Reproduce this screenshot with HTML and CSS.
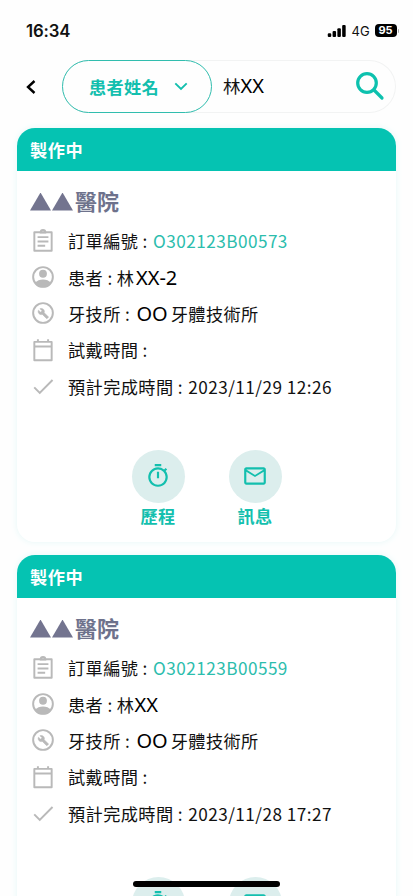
FILE: index.html
```html
<!DOCTYPE html>
<html lang="zh-Hant">
<head>
<meta charset="utf-8">
<title>訂單</title>
<link rel="stylesheet" href="styles.css">
</head>
<body>
<svg class="defs" aria-hidden="true">
  <symbol id="clipboard" viewBox="0 0 24 24">
    <path fill="none" stroke="currentColor" stroke-width="1.8" stroke-linejoin="round" d="M4 4h16v17H4z"/>
    <path fill="currentColor" fill-rule="evenodd" d="M9 4a3 3 0 0 1 6 0v1H9zM12 2.8a.9.9 0 1 0 0 1.8.9.9 0 0 0 0-1.8zM7 7.5h10v1.8H7zM7 11.5h10v1.8H7zM7 15.5h7v1.8H7z"/>
  </symbol>
  <symbol id="person" viewBox="0 0 24 24">
    <circle cx="12" cy="12" r="9.1" fill="none" stroke="currentColor" stroke-width="1.8"/>
    <circle cx="12" cy="9" r="3.6" fill="currentColor"/>
    <path fill="currentColor" d="M4.5 17.5Q7.5 14.3 12 14.3t7.5 3.2Q17 21.5 12 21.5t-7.5-4z"/>
  </symbol>
  <symbol id="wrench" viewBox="0 0 24 24">
    <circle cx="12" cy="12" r="9.1" fill="none" stroke="currentColor" stroke-width="1.8"/>
    <path fill="currentColor" stroke="currentColor" stroke-width=".5" d="M16.900 15.490l-3.800-3.800c.4-1 .2-2.200-.6-3-.9-.9-2.200-1.100-3.300-.6l1.900 1.900-1.300 1.300-2-1.900c-.5 1.100-.3 2.400.6 3.300.8.8 2 1 3 .6l3.800 3.800c.2.2.5.2.7 0l1-1c.2-.1.2-.4 0-.6z"/>
  </symbol>
  <symbol id="calendar" viewBox="0 0 24 24">
    <path fill="none" stroke="currentColor" stroke-width="1.8" stroke-linejoin="round" d="M4 4.500h16v17H4zM4 8.800h16M7.300 2v3M16.700 2v3"/>
  </symbol>
  <symbol id="check" viewBox="0 0 24 24">
    <path fill="none" stroke="currentColor" stroke-width="1.8" d="M3.900 13.300l5.100 5L20.800 6.500"/>
  </symbol>
  <symbol id="timer" viewBox="0 0 24 24">
    <path fill="currentColor" d="M9 1h6v2H9zM11 8h2v6h-2zM19.03 7.39l1.42-1.42c-.43-.51-.9-.99-1.41-1.41l-1.42 1.42A8.96 8.96 0 0 0 12 4a9 9 0 1 0 7.03 3.39zM12 20a7 7 0 1 1 0-14 7 7 0 0 1 0 14z"/>
  </symbol>
  <symbol id="mail" viewBox="0 0 24 24">
    <path fill="currentColor" d="M22 6c0-1.100-.9-2-2-2H4c-1.100 0-2 .9-2 2v12c0 1.100.9 2 2 2h16c1.100 0 2-.9 2-2zm-2 0l-8 5-8-5zm0 12H4V8l8 5 8-5z"/>
  </symbol>
</svg>
<div class="screen">
  <header class="status">
    <span class="time">16:34</span>
    <svg class="signal" viewBox="0 0 20 13"><rect x="0" y="9" width="3.800" height="4" rx="1.200"/><rect x="5.200" y="6.500" width="3.800" height="6.500" rx="1.200"/><rect x="10.400" y="3.500" width="3.800" height="9.500" rx="1.200"/><rect x="15.600" y="0" width="3.800" height="13" rx="1.200"/></svg>
    <span class="network">4G</span>
    <span class="battery">95</span>
    <span class="battery-tip"></span>
  </header>

  <nav class="toolbar">
    <svg class="back" viewBox="0 0 10 14"><path d="M8.500 1L2 7l6.500 6"/></svg>
    <div class="search">
      <div class="filter">
        <span>患者姓名</span>
        <svg class="chevron" viewBox="0 0 14 9"><path d="M1.300 1.300L7 7l5.700-5.700"/></svg>
      </div>
      <div class="query">林<span class="latin">XX</span></div>
      <svg class="magnifier" viewBox="0 0 30 30"><circle cx="12" cy="12" r="9.300"/><path d="M19 19l8 8"/></svg>
    </div>
  </nav>

  <main class="orders">
    <article class="card">
      <div class="card-head">製作中</div>
      <div class="card-body">
        <h2><span class="triangle"></span><span class="triangle"></span>醫院</h2>
        <ul>
          <li><svg><use href="#clipboard"/></svg><span>訂單編號 : <span class="code">O302123B00573</span></span></li>
          <li><svg><use href="#person"/></svg><span>患者 : 林<span class="latin suffixed">XX-2</span></span></li>
          <li><svg><use href="#wrench"/></svg><span>牙技所 : <span class="latin lab">OO</span>牙體技術所</span></li>
          <li><svg><use href="#calendar"/></svg><span>試戴時間 :</span></li>
          <li><svg><use href="#check"/></svg><span>預計完成時間 : <span class="date">2023/11/29 12:26</span></span></li>
        </ul>
        <div class="actions">
          <div class="action"><div class="disc"><svg><use href="#timer"/></svg></div>歷程</div>
          <div class="action"><div class="disc"><svg><use href="#mail"/></svg></div>訊息</div>
        </div>
      </div>
    </article>

    <article class="card">
      <div class="card-head">製作中</div>
      <div class="card-body">
        <h2><span class="triangle"></span><span class="triangle"></span>醫院</h2>
        <ul>
          <li><svg><use href="#clipboard"/></svg><span>訂單編號 : <span class="code">O302123B00559</span></span></li>
          <li><svg><use href="#person"/></svg><span>患者 : 林<span class="latin">XX</span></span></li>
          <li><svg><use href="#wrench"/></svg><span>牙技所 : <span class="latin lab">OO</span>牙體技術所</span></li>
          <li><svg><use href="#calendar"/></svg><span>試戴時間 :</span></li>
          <li><svg><use href="#check"/></svg><span>預計完成時間 : <span class="date">2023/11/28 17:27</span></span></li>
        </ul>
        <div class="actions">
          <div class="action"><div class="disc"><svg><use href="#timer"/></svg></div></div>
          <div class="action"><div class="disc"><svg><use href="#mail"/></svg></div></div>
        </div>
      </div>
    </article>
  </main>
  <div class="home-bar"></div>
</div>
</body>
</html>
```
FILE: styles.css
```css
* { box-sizing: border-box; }
body {
  margin: 0;
  background: #fefefe;
  color: #111;
  font-family: "Noto Sans CJK TC", sans-serif;
}
.defs { position: absolute; width: 0; height: 0; }
.screen {
  position: relative;
  width: 413px;
  height: 896px;
  overflow: hidden;
}
.status {
  display: flex;
  align-items: center;
  height: 60px;
  padding: 1px 14px 0 26px;
  font-family: Inter, sans-serif;
}
.time { flex: 1; font-size: 16.800px; font-weight: 600; letter-spacing: -0.150px; }
.signal { width: 20px; height: 12px; margin-right: 5px; }
.network { width: 23px; font-size: 13px; }
.battery {
  width: 22px;
  height: 13px;
  border-radius: 4px;
  background: #000;
  color: #fff;
  font-size: 11px;
  font-weight: 700;
  line-height: 13px;
  text-align: center;
}
.battery-tip { width: 1.500px; height: 4px; margin-left: 1px; border-radius: 0 2px 2px 0; background: #aaa; }

.toolbar { display: flex; align-items: center; height: 53px; padding: 0 17px 0 26px; }
.back { width: 10px; height: 14px; margin-right: 26px; fill: none; stroke: #000; stroke-width: 2.400; }
.search {
  display: flex;
  flex: 1;
  align-items: center;
  height: 53px;
  padding-right: 10px;
  border: 1px solid #f2f3f3;
  border-left: 0;
  border-radius: 27px;
}
.filter {
  display: flex;
  align-items: center;
  justify-content: space-between;
  width: 150px;
  height: 53px;
  padding: 0 23px 0 26px;
  border: 1px solid #31bdae;
  border-radius: 27px;
  color: #13bfae;
  font-size: 17.200px;
  font-weight: 700;
  letter-spacing: 0.300px;
}
.chevron { width: 14px; height: 9px; fill: none; stroke: currentColor; stroke-width: 1.900; }
.query { flex: 1; padding: 0 0 2px 11px; font-size: 17.500px; }
.magnifier { width: 30px; height: 30px; margin-bottom: 1px; fill: none; stroke: #0dc1ae; stroke-width: 3.200; stroke-linecap: round; }
.latin { font-family: "Noto Sans", sans-serif; font-size: 20px; letter-spacing: 0; line-height: 1; color: #000; }

.orders { display: grid; gap: 13px; padding: 15px 17px 0; }
.card {
  height: 414px;
  overflow: hidden;
  border-radius: 18px;
  background: #fff;
  box-shadow: 0 0 7px #e6f8f8;
}
.card-head {
  height: 43px;
  padding-left: 13px;
  background: #05c3b2;
  color: #fff;
  font-size: 17.200px;
  font-weight: 700;
  letter-spacing: 0.600px;
  line-height: 43px;
}
.card-body { padding: 13px 13px 0; }
h2 {
  display: flex;
  align-items: center;
  height: 32px;
  margin: 0 0 7px;
  color: #6e728c;
  font-size: 22px;
  font-weight: 700;
}
.triangle {
  width: 21px;
  height: 18px;
  margin: 3px 1px 0 0;
  background: #73748f;
  clip-path: polygon(50% 0, 100% 100%, 0 100%);
}
.triangle + .triangle { margin-right: 2px; }
ul { margin: 0; padding: 0; list-style: none; }
li {
  display: flex;
  align-items: center;
  height: 36.400px;
  font-size: 17.200px;
  letter-spacing: 0.400px;
  line-height: 26px;
  white-space: nowrap;
}
li svg { width: 26px; height: 26px; margin: -1px 12px 0 0; color: #b9b9b9; }
.code { margin-left: 1px; color: #2cbdad; letter-spacing: 0.450px; }
.date { margin-left: 1px; letter-spacing: 0.450px; }
.suffixed { margin-left: 1.500px; }
.lab { margin: 0 3px 0 2px; }
.actions { display: flex; justify-content: center; gap: 44px; margin-top: 45px; }
.action {
  width: 53px;
  color: #13bfae;
  font-size: 17.200px;
  font-weight: 700;
  letter-spacing: 0.300px;
  line-height: 26px;
  text-align: center;
}
.disc {
  display: grid;
  place-items: center;
  height: 53px;
  border-radius: 50%;
  background: #dceeed;
}
.disc svg { width: 26px; height: 26px; }
.home-bar {
  position: absolute;
  left: 133px;
  bottom: 9px;
  width: 147px;
  height: 6px;
  border-radius: 3px;
  background: #000;
}
```
